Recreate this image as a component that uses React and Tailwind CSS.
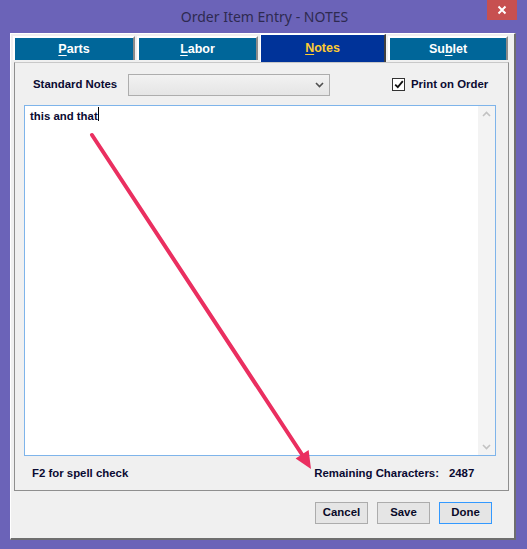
import React from 'react';

const ui = { fontFamily: '"Liberation Sans", Arial, sans-serif' };

const Tab = ({ label, hot, width, active }) => {
  const i = label.indexOf(hot);
  const text = (
    <>
      {label.slice(0, i)}
      <span className="underline underline-offset-2">{hot}</span>
      {label.slice(i + 1)}
    </>
  );
  if (active) {
    return (
      <div
        className="h-[28px] bg-[#003399] border-t border-l border-white border-r-2 border-r-[#404040] flex items-center justify-center text-[12.5px] font-bold text-[#ffcc33]"
        style={{ width }}
      >
        {text}
      </div>
    );
  }
  return (
    <div
      className="mt-[2px] h-[24px] bg-[#006699] border-t-2 border-l-2 border-white border-r-2 border-r-[#8a8a8a] flex items-center justify-center text-[12.5px] font-bold text-white"
      style={{ width }}
    >
      {text}
    </div>
  );
};

const Btn = ({ children, primary }) => (
  <button
    className={
      'w-[53px] h-[22px] bg-[#e5e5e5] text-[11.4px] font-bold text-[#0a0a28] border ' +
      (primary ? 'border-[#3399ff]' : 'border-[#acacac]')
    }
  >
    {children}
  </button>
);

export default function App() {
  return (
    <div className="relative w-[527px] h-[549px] bg-[#6b63b8] flex flex-col" style={ui}>
      {/* title bar */}
      <div className="relative h-[33px] flex items-center justify-center">
        <span
          className="text-[14px] text-[#2e2a50] ml-[2px]"
          style={{ fontFamily: '"Noto Sans", "Open Sans", sans-serif' }}
        >
          Order Item Entry - NOTES
        </span>
        <div className="absolute top-0 right-[10px] w-[30px] h-[20px] bg-[#c75050] flex items-center justify-center">
          <svg width="10" height="10" viewBox="0 0 10 10">
            <path d="M1.5 1.5 L8.5 8.5 M8.5 1.5 L1.5 8.5" stroke="white" strokeWidth="2" />
          </svg>
        </div>
      </div>

      {/* client area */}
      <div className="ml-[10px] w-[506px] h-[507px] bg-[#f0f0f0] border-l border-t border-white border-r-2 border-b-2 border-r-[#6e6e6e] border-b-[#6e6e6e] flex flex-col">
        {/* tabs */}
        <div className="flex gap-[2px] ml-[2px] h-[28px]">
          <Tab label="Parts" hot="P" width={122} />
          <Tab label="Labor" hot="L" width={121} />
          <Tab label="Notes" hot="N" width={126} active />
          <Tab label="Sublet" hot="b" width={120} />
        </div>

        {/* tab panel */}
        <div className="ml-[3px] w-[495px] h-[429px] border border-[#8f8f8f] border-t-[#c8c8c8] flex flex-col">
          <div className="flex items-center h-[42px] pt-[1px]">
            <span className="ml-[18px] w-[95px] text-[11.4px] font-bold text-[#0a0a32]">Standard Notes</span>
            <div className="w-[202px] h-[22px] border border-[#adadad] bg-gradient-to-b from-[#f2f2f2] to-[#e5e5e5] flex items-center justify-end pr-[5px]">
              <svg width="9" height="6" viewBox="0 0 9 6">
                <path d="M1 1 L4.5 4.5 L8 1" stroke="#505050" strokeWidth="1.6" fill="none" />
              </svg>
            </div>
            <div className="ml-[62px] w-[13px] h-[13px] border border-[#333] bg-white flex items-center justify-center">
              <svg width="10" height="9" viewBox="0 0 10 9">
                <path d="M1.2 4.6 L3.8 7.2 L8.8 1.2" stroke="#111" strokeWidth="1.8" fill="none" />
              </svg>
            </div>
            <span className="ml-[6px] text-[11.4px] font-bold text-[#0a0a32]">Print on Order</span>
          </div>

          {/* notes text box */}
          <div className="ml-[9px] w-[472px] h-[351px] border border-[#7eb4ea] bg-white flex">
            <div className="flex-1 pl-[5px] pt-[2px] text-[11.4px] font-bold text-[#0a0a32] flex items-start">
              <span>this and that</span>
              <span className="w-px h-[14px] bg-black mt-[-1px]" />
            </div>
            <div className="w-[17px] bg-[#f3f3f3] flex flex-col justify-between items-center py-[5px]">
              <svg width="9" height="6" viewBox="0 0 9 6">
                <path d="M1 5 L4.5 1.5 L8 5" stroke="#c2c2c2" strokeWidth="1.6" fill="none" />
              </svg>
              <svg width="9" height="6" viewBox="0 0 9 6">
                <path d="M1 1 L4.5 4.5 L8 1" stroke="#c2c2c2" strokeWidth="1.6" fill="none" />
              </svg>
            </div>
          </div>

          <div className="flex items-center h-[32px] pt-[4px] text-[11.4px] font-bold text-[#0a0a32]">
            <span className="ml-[17px]">F2 for spell check</span>
            <span className="ml-[186px]">Remaining Characters:</span>
            <span className="ml-[10px]">2487</span>
          </div>
        </div>

        {/* buttons */}
        <div className="flex justify-end gap-[9px] pr-[22px] mt-[11px]">
          <Btn>Cancel</Btn>
          <Btn>Save</Btn>
          <Btn primary>Done</Btn>
        </div>
      </div>

      {/* annotation arrow */}
      <svg className="absolute inset-0 pointer-events-none" width="527" height="549" viewBox="0 0 527 549">
        <line x1="92" y1="135" x2="303" y2="456" stroke="#ea2f60" strokeWidth="4" strokeLinecap="round" />
        <polygon points="311,469 295.6,458.6 308.6,450" fill="#ea2f60" />
      </svg>
    </div>
  );
}
